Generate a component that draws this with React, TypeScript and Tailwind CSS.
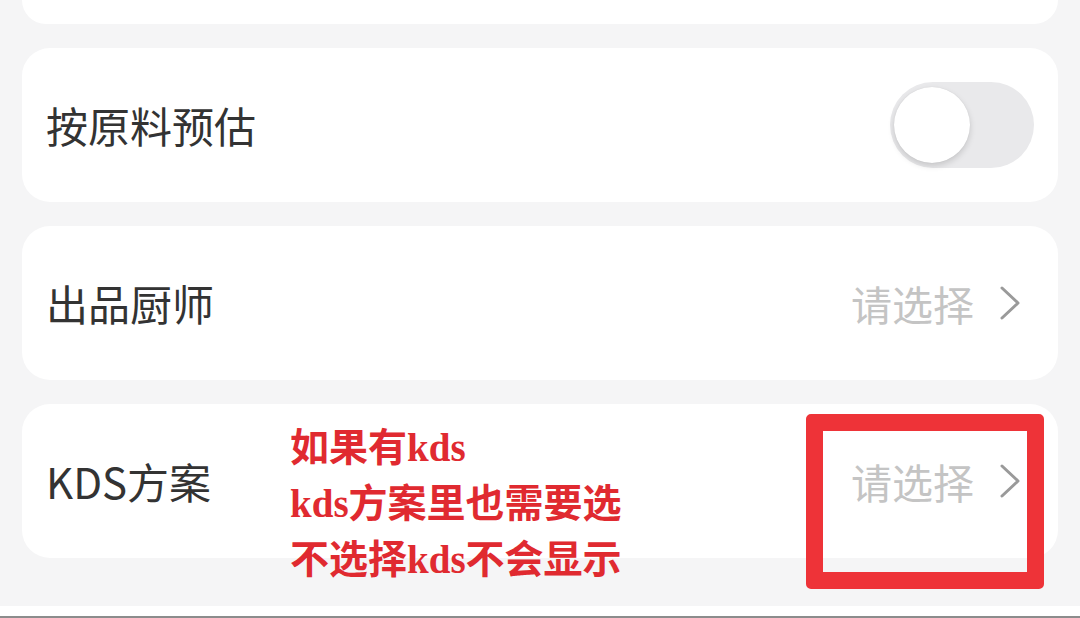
import React from "react";

const Chevron = () => (
  <svg width="26" height="36" viewBox="0 0 26 36" className="ml-[24px]">
    <path d="M4 3 L20 18 L4 33" fill="none" stroke="#9a9a9a" strokeWidth="3" strokeLinecap="round" strokeLinejoin="round" />
  </svg>
);

const Row = ({ label, right }: { label: string; right: React.ReactNode }) => (
  <div className="h-[154px] bg-white rounded-[28px] flex items-center justify-between pl-[24px] pr-[34px]">
    <span className="text-[42px] leading-none text-[#333333]">{label}</span>
    {right}
  </div>
);

const Select = () => (
  <div className="flex items-center">
    <span className="text-[41px] leading-none text-[#c4c4c4]">请选择</span>
    <Chevron />
  </div>
);

export default function App() {
  return (
    <div
      className="w-[1080px] h-[618px] overflow-hidden bg-[#f5f5f6] relative flex flex-col"
      style={{ fontFamily: '"Noto Sans CJK SC", "Noto Sans", sans-serif' }}
    >
      <div className="px-[22px] flex flex-col gap-[24px]">
        <div className="h-[24px] bg-white rounded-b-[28px]" />
        <div className="h-[154px] bg-white rounded-[28px] flex items-center justify-between pl-[24px] pr-[24px]">
          <span className="text-[42px] leading-none text-[#333333]">按原料预估</span>
          <div className="w-[144px] h-[86px] rounded-full bg-[#e9e9eb] flex items-center pl-[4px]">
            <div className="w-[76px] h-[76px] rounded-full bg-white shadow-[0_3px_6px_rgba(0,0,0,0.15),0_0_1px_rgba(0,0,0,0.1)]" />
          </div>
        </div>
        <Row label="出品厨师" right={<Select />} />
        <Row label="KDS方案" right={<Select />} />
      </div>
      <div className="h-[48px] overflow-hidden pl-[60px] pt-[46px] flex items-start gap-[40px]">
        <span className="text-[36px] leading-none text-[#3b82f6]">✚</span>
        <span className="text-[36px] leading-none text-[#333]">添加做法</span>
      </div>
      <div className="h-[10px] bg-white" />
      <div className="h-[2px] bg-[#8c8c8c]" />

      <div className="absolute left-[806px] top-[414px] w-[238px] h-[175px] border-[17px] border-[#ee3338] rounded-[5px]" />
      <div
        className="absolute left-[290px] top-[420px] text-[39px] leading-[56px] font-bold text-[#e02a30]"
        style={{ fontFamily: '"Liberation Serif", "Noto Sans CJK SC", serif' }}
      >
        <div>如果有kds</div>
        <div>kds方案里也需要选</div>
        <div>不选择kds不会显示</div>
      </div>
    </div>
  );
}
